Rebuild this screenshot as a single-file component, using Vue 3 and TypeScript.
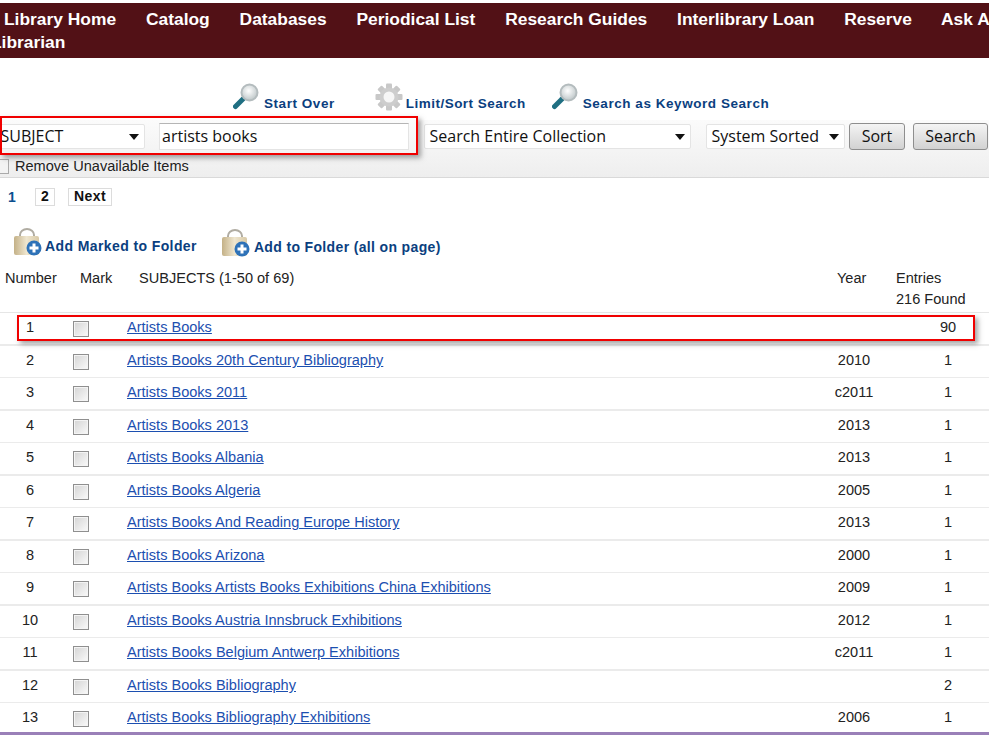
<script setup lang="ts">
interface Row { n: number; title: string; year: string; count: number; thick: boolean }
const nav = ['Library Home', 'Catalog', 'Databases', 'Periodical List', 'Research Guides', 'Interlibrary Loan', 'Reserve', 'Ask A Librarian']
const data: [string, string, number][] = [
  ['Artists Books', '', 90],
  ['Artists Books 20th Century Bibliography', '2010', 1],
  ['Artists Books 2011', 'c2011', 1],
  ['Artists Books 2013', '2013', 1],
  ['Artists Books Albania', '2013', 1],
  ['Artists Books Algeria', '2005', 1],
  ['Artists Books And Reading Europe History', '2013', 1],
  ['Artists Books Arizona', '2000', 1],
  ['Artists Books Artists Books Exhibitions China Exhibitions', '2009', 1],
  ['Artists Books Austria Innsbruck Exhibitions', '2012', 1],
  ['Artists Books Belgium Antwerp Exhibitions', 'c2011', 1],
  ['Artists Books Bibliography', '', 2],
  ['Artists Books Bibliography Exhibitions', '2006', 1],
]
const rows: Row[] = data.map((d, i) => ({ n: i + 1, title: d[0], year: d[1], count: d[2], thick: i % 2 === 0 }))
</script>

<template>
  <div class="page">
    <nav class="nav">
      <template v-for="item in nav" :key="item"><a class="nav-item">{{ item }}</a>{{ ' ' }}</template>
    </nav>

    <div class="tools">
      <a class="tool t1">
        <svg width="27" height="27" viewBox="0 0 27 27">
          <defs>
            <radialGradient id="lens" cx="45%" cy="40%" r="65%"><stop offset="0" stop-color="#fff"/><stop offset="1" stop-color="#b9c2c4"/></radialGradient>
          </defs>
          <path d="M10 16 2.5 23.5" stroke="#1f6f82" stroke-width="5" stroke-linecap="round"/>
          <circle cx="16.5" cy="9.5" r="8" fill="url(#lens)" stroke="#b4bcbe" stroke-width="2"/>
        </svg>
        Start Over
      </a>
      <a class="tool t2">
        <svg width="28" height="28" viewBox="0 0 28 28">
          <g fill="#c8c8c8">
            <rect v-for="a in [0,45,90,135]" :key="a" x="11" y="0.5" width="6" height="27" rx="1" :transform="`rotate(${a} 14 14)`"/>
          </g>
          <circle cx="14" cy="14" r="9.5" fill="#cdcdcd"/>
          <circle cx="14" cy="14" r="5.5" fill="#f6f6f6"/>
        </svg>
        Limit/Sort Search
      </a>
      <a class="tool t3">
        <svg width="27" height="27" viewBox="0 0 27 27">
          <path d="M10 16 2.5 23.5" stroke="#1f6f82" stroke-width="5" stroke-linecap="round"/>
          <circle cx="16.5" cy="9.5" r="8" fill="url(#lens)" stroke="#b4bcbe" stroke-width="2"/>
        </svg>
        Search as Keyword Search
      </a>
    </div>

    <div class="searchbar">
      <div class="controls">
        <div class="sel s1"><span>SUBJECT</span></div>
        <input class="term" value="artists books" />
        <div class="sel s2"><span>Search Entire Collection</span></div>
        <div class="sel s3"><span>System Sorted</span></div>
        <button class="btn b1">Sort</button>
        <button class="btn b2">Search</button>
      </div>
      <label class="avail"><input type="checkbox" class="availbox" />Remove Unavailable Items</label>
    </div>

    <div class="pager">
      <a class="cur">1</a>
      <a class="pg p2">2</a>
      <a class="pg p3">Next</a>
    </div>

    <div class="folders">
      <a class="folder f1">
        <svg width="28" height="28" viewBox="0 0 28 28">
          <defs>
            <linearGradient id="bag" x1="0" y1="0" x2="1" y2="0"><stop offset="0" stop-color="#c4b187"/><stop offset=".5" stop-color="#efe6cf"/><stop offset="1" stop-color="#d8c9a6"/></linearGradient>
          </defs>
          <path d="M6 10V7a7 6 0 0 1 14 0v3" fill="none" stroke="#b0aca2" stroke-width="2"/>
          <rect x="0" y="8" width="25" height="19" rx="2" fill="url(#bag)"/>
          <circle cx="20" cy="20" r="7.5" fill="#2e72b8"/>
          <path d="M20 15.5v9M15.5 20h9" stroke="#fff" stroke-width="3"/>
        </svg>
        <span class="ftext">Add Marked to Folder</span>
      </a>
      <a class="folder f2">
        <svg width="28" height="28" viewBox="0 0 28 28">
          <path d="M6 10V7a7 6 0 0 1 14 0v3" fill="none" stroke="#b0aca2" stroke-width="2"/>
          <rect x="0" y="8" width="25" height="19" rx="2" fill="url(#bag)"/>
          <circle cx="20" cy="20" r="7.5" fill="#2e72b8"/>
          <path d="M20 15.5v9M15.5 20h9" stroke="#fff" stroke-width="3"/>
        </svg>
        <span class="ftext">Add to Folder (all on page)</span>
      </a>
    </div>

    <div class="head">
      <div class="h-num">Number</div>
      <div class="h-mark">Mark</div>
      <div class="h-subj">SUBJECTS (1-50 of 69)</div>
      <div class="h-year">Year</div>
      <div class="h-ent">Entries<br />216 Found</div>
    </div>

    <div class="rows">
      <div v-for="r in rows" :key="r.n" class="row" :class="{ thick: r.thick }">
        <div class="num">{{ r.n }}</div>
        <div class="mark"><input type="checkbox" class="box" /></div>
        <div class="title"><a href="#">{{ r.title }}</a></div>
        <div class="year">{{ r.year }}</div>
        <div class="count">{{ r.count }}</div>
      </div>
    </div>
    <div class="rule"></div>

    <div class="hl hl-search"></div>
    <div class="hl hl-row"></div>
  </div>
</template>

<style>
html, body { margin: 0; overflow: hidden; background: #fff; }
</style>

<style scoped>
.page {
  position: relative;
  width: 989px;
  height: 735px;
  overflow: hidden;
  background: #fff;
  font-family: "Liberation Sans", Arial, sans-serif;
  color: #111;
}
.nav {
  margin: 3px 0 0 -9px;
  width: 1040px;
  height: 55px;
  box-sizing: border-box;
  padding-top: 5px;
  text-indent: 13px;
  background: #521116;
  color: #fff;
  font-weight: 700;
  font-size: 17.4px;
  line-height: 23px;
}
.nav-item { margin-right: 25px; }
.tools {
  height: 62px;
  position: relative;
  display: flex;
  align-items: flex-end;
  padding-left: 233px;
  box-sizing: border-box;
  padding-bottom: 9px;
}
.tool, .folder {
  display: flex;
  align-items: flex-end;
  color: #0b3f7f;
  font-weight: 700;
  white-space: nowrap;
  line-height: 15px;
}
.tool { font-size: 13.5px; letter-spacing: 0.55px; }
.tool svg { margin-right: 4px; margin-bottom: 1px; }
.t2 { margin-left: 40px; letter-spacing: 0.48px; }
.t2 svg { margin-right: 3px; margin-bottom: 0; }
.t3 { margin-left: 26px; }
.searchbar {
  height: 58px;
  box-sizing: border-box;
  border-bottom: 1px solid #d9d9d9;
  background: linear-gradient(#fbfbfb, #eeeeee);
  font-family: "Open Sans", Tahoma, sans-serif;
}
.controls {
  display: flex;
  align-items: center;
  height: 30px;
  padding-top: 2px;
  box-sizing: border-box;
  margin-left: -5px;
}
.sel {
  position: relative;
  height: 25px;
  box-sizing: border-box;
  border: 1px solid #e4e4e4;
  border-radius: 2px;
  background: #fff;
  font-size: 16px;
  line-height: 22px;
  padding-left: 4.5px;
  white-space: nowrap;
  flex: none;
}
.sel::after {
  content: "";
  position: absolute;
  right: 5px;
  top: 9px;
  border-left: 5.5px solid transparent;
  border-right: 5.5px solid transparent;
  border-top: 6px solid #111;
}
.s1 { width: 150px; }
.s2 { width: 267px; margin-left: 15px; }
.s3 { width: 139px; margin-left: 15px; }
.term {
  width: 250px;
  height: 27px;
  box-sizing: border-box;
  margin: 0 0 0 14px;
  padding: 0 2px;
  border: 1px solid #e4e4e4;
  border-top-color: #b5b5b5;
  background: #fff;
  font: 16px "Open Sans", Tahoma, sans-serif;
  color: #111;
  outline: none;
  flex: none;
}
.btn {
  height: 27px;
  box-sizing: border-box;
  margin: 0;
  padding: 0;
  border: 1px solid #8e8e8e;
  border-radius: 3px;
  background: linear-gradient(#f4f4f4, #d2d2d2);
  font: 16px "Open Sans", Tahoma, sans-serif;
  color: #111;
  flex: none;
}
.b1 { width: 56px; margin-left: 4px; }
.b2 { width: 75px; margin-left: 8px; }
.avail {
  display: flex;
  align-items: center;
  height: 22px;
  margin-top: 5px;
  margin-left: -3px;
  font: 14.55px "Liberation Sans", Arial, sans-serif;
  color: #222;
}
.availbox {
  appearance: none;
  width: 12px;
  height: 15px;
  box-sizing: border-box;
  margin: 0 6px 0 0;
  border: 1px solid #aaa;
  background: #f3f3f3;
  flex: none;
}
.pager {
  display: flex;
  align-items: center;
  height: 20px;
  margin-top: 9px;
  padding-left: 8px;
  font-weight: 700;
  font-size: 14px;
  letter-spacing: 0.4px;
}
.cur { color: #0b4f8f; width: 27px; }
.pg {
  box-sizing: border-box;
  height: 18px;
  line-height: 15px;
  border: 1px solid #dcdcdc;
  text-align: center;
}
.p2 { width: 20px; }
.p3 { width: 44px; margin-left: 13px; }
.folders {
  display: flex;
  align-items: flex-end;
  height: 28px;
  margin-top: 21px;
  padding-left: 14px;
}
.folder svg { margin-right: 3px; }
.folder { font-size: 14px; letter-spacing: 0.4px; }
.ftext { position: relative; top: -2px; }
.f2 { margin-left: 25px; position: relative; top: 1px; letter-spacing: 0.35px; }
.f2 svg { margin-right: 4px; }
.head {
  display: grid;
  grid-template-columns: 75px 59px 698px 59px 1fr;
  padding-left: 5px;
  margin-top: 12px;
  height: 45px;
  font-size: 14.55px;
  line-height: 21px;
  color: #222;
  box-sizing: border-box;
  border-bottom: 1px solid #e6e6e6;
}
.rows { display: block; }
.row {
  display: grid;
  grid-template-columns: 60px 67px 693px 68px 120px;
  align-items: center;
  height: 32.5px;
  box-sizing: border-box;
  padding-bottom: 2px;
  border-bottom: 1px solid #ebebeb;
  font-size: 14.55px;
  color: #222;
}
.row.thick { border-bottom-width: 2px; }
.num { text-align: center; }
.mark { padding-left: 13px; display: flex; align-items: center; }
.box {
  appearance: none;
  width: 16px;
  height: 16px;
  margin: 3px 0 0;
  box-sizing: border-box;
  border: 1px solid #8f8f8f;
  box-shadow: inset 0 0 0 1px #f4f4f4;
  background: linear-gradient(135deg, #d4d4d4, #fafafa);
}
.title a { color: #1c4fb0; text-decoration: underline; }
.year { text-align: center; }
.count { text-align: center; width: 120px; }
.rule {
  position: absolute;
  left: 0;
  right: 0;
  top: 732px;
  height: 3px;
  background: #9a80b8;
}
.hl {
  position: absolute;
  box-sizing: border-box;
  border: 2px solid #f00000;
  box-shadow: 3px 3px 5px rgba(90, 90, 90, 0.55);
}
.hl-search { left: 0; top: 116px; width: 418px; height: 39px; }
.hl-row { left: 17px; top: 315px; width: 958px; height: 26px; }
</style>
